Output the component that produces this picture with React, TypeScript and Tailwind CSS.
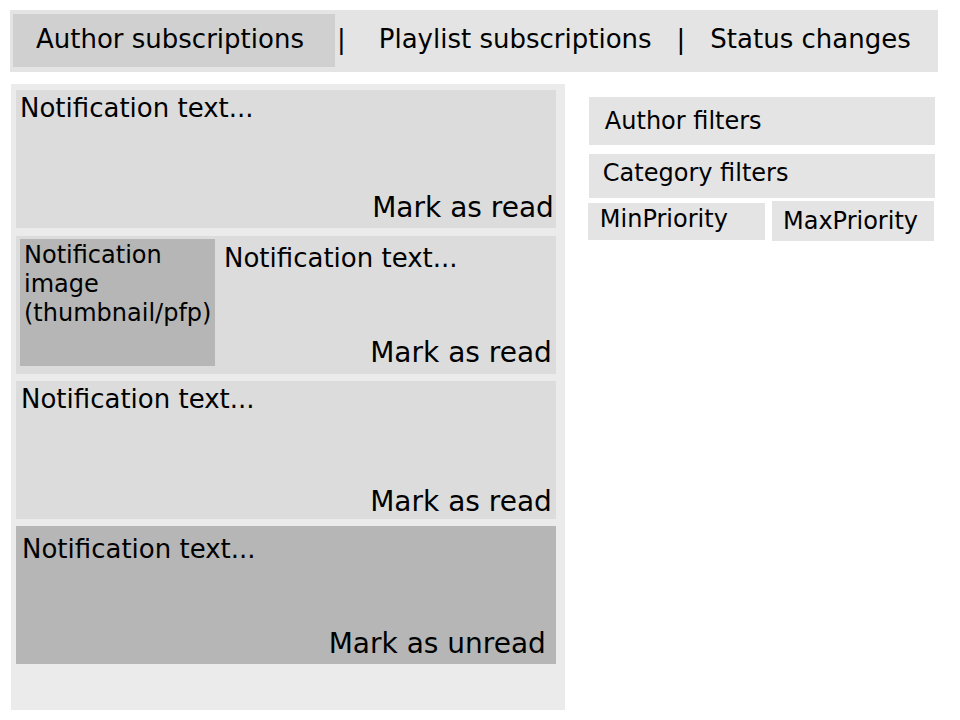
type Notification = {
  id: number;
  action: string;
  image?: string;
  card: string;
  text: string;
  button: string;
};

const notifications: Notification[] = [
  {
    id: 1,
    action: 'Mark as read',
    card: 'mb-2 bg-[#dcdcdc]',
    text: 'pt-0.5 pl-1',
    button: 'pr-0.5 pb-1',
  },
  {
    id: 2,
    action: 'Mark as read',
    image: 'Notification image (thumbnail/pfp)',
    card: 'mb-[7px] bg-[#dcdcdc]',
    text: 'pt-1.5 pl-[9px]',
    button: 'pr-1 pb-[5px]',
  },
  {
    id: 3,
    action: 'Mark as read',
    card: 'mb-[7px] bg-[#dcdcdc]',
    text: 'pt-0.5 pl-[5px]',
    button: 'pr-1 pb-px',
  },
  {
    id: 4,
    action: 'Mark as unread',
    card: 'bg-[#b6b6b6]',
    text: 'pt-[7px] pl-1.5',
    button: 'pr-2.5 pb-1',
  },
];

function NotificationCard({ item }: { item: Notification }) {
  return (
    <li className={`flex min-h-[138px] ${item.card}`}>
      {item.image && (
        <div className="mt-[3px] mb-2 ml-1 w-[195px] shrink-0 bg-[#b6b6b6] pt-0.5 pl-1 text-[24px] leading-[29px]">
          {item.image}
        </div>
      )}
      <div className="flex flex-1 flex-col justify-between">
        <p className={`text-[26px] leading-8 ${item.text}`}>Notification text...</p>
        <button type="button" className={`self-end text-[28px] leading-8 ${item.button}`}>
          {item.action}
        </button>
      </div>
    </li>
  );
}

export default function App() {
  return (
    <div className="min-h-screen bg-white pt-2.5 pb-2.5 font-['DejaVu_Sans',sans-serif] text-black">
      <nav className="mr-[22px] ml-2.5 flex min-h-[62px] bg-[#e4e4e4] pt-1 pb-[5px] pl-[3px] text-[26px] leading-8 whitespace-nowrap">
        <button type="button" aria-current="page" className="w-[322px] bg-[#d0d0d0] pb-[3px] pl-[23px] text-left">
          Author subscriptions
        </button>
        <span className="flex items-center pb-[3px] pl-0.5">|</span>
        <button type="button" className="pb-[3px] pl-[33px]">
          Playlist subscriptions
        </button>
        <span className="flex items-center pb-[3px] pl-[25px]">|</span>
        <button type="button" className="pb-[3px] pl-[25px]">
          Status changes
        </button>
      </nav>

      <div className="mt-3 mr-[25px] ml-[11px] grid grid-cols-[8fr_5fr] gap-6">
        <main className="bg-[#ebebeb] pt-1.5 pr-[9px] pb-[46px] pl-[5px]">
          <ul>
            {notifications.map((item) => (
              <NotificationCard key={item.id} item={item} />
            ))}
          </ul>
        </main>

        <aside className="pt-[13px] text-[24px] leading-7">
          <button type="button" className="block h-12 w-full bg-[#e4e4e4] pl-4 text-left">
            Author filters
          </button>
          <button type="button" className="mt-[9px] block h-11 w-full bg-[#e4e4e4] pb-1.5 pl-3.5 text-left">
            Category filters
          </button>
          <div className="mt-[3px] -ml-px flex items-center gap-[7px] pr-px">
            <button type="button" className="h-[37px] flex-1 bg-[#e4e4e4] pb-1 pl-3 text-left">
              MinPriority
            </button>
            <button type="button" className="h-10 w-[162px] bg-[#e4e4e4] pl-[11px] text-left">
              MaxPriority
            </button>
          </div>
        </aside>
      </div>
    </div>
  );
}
